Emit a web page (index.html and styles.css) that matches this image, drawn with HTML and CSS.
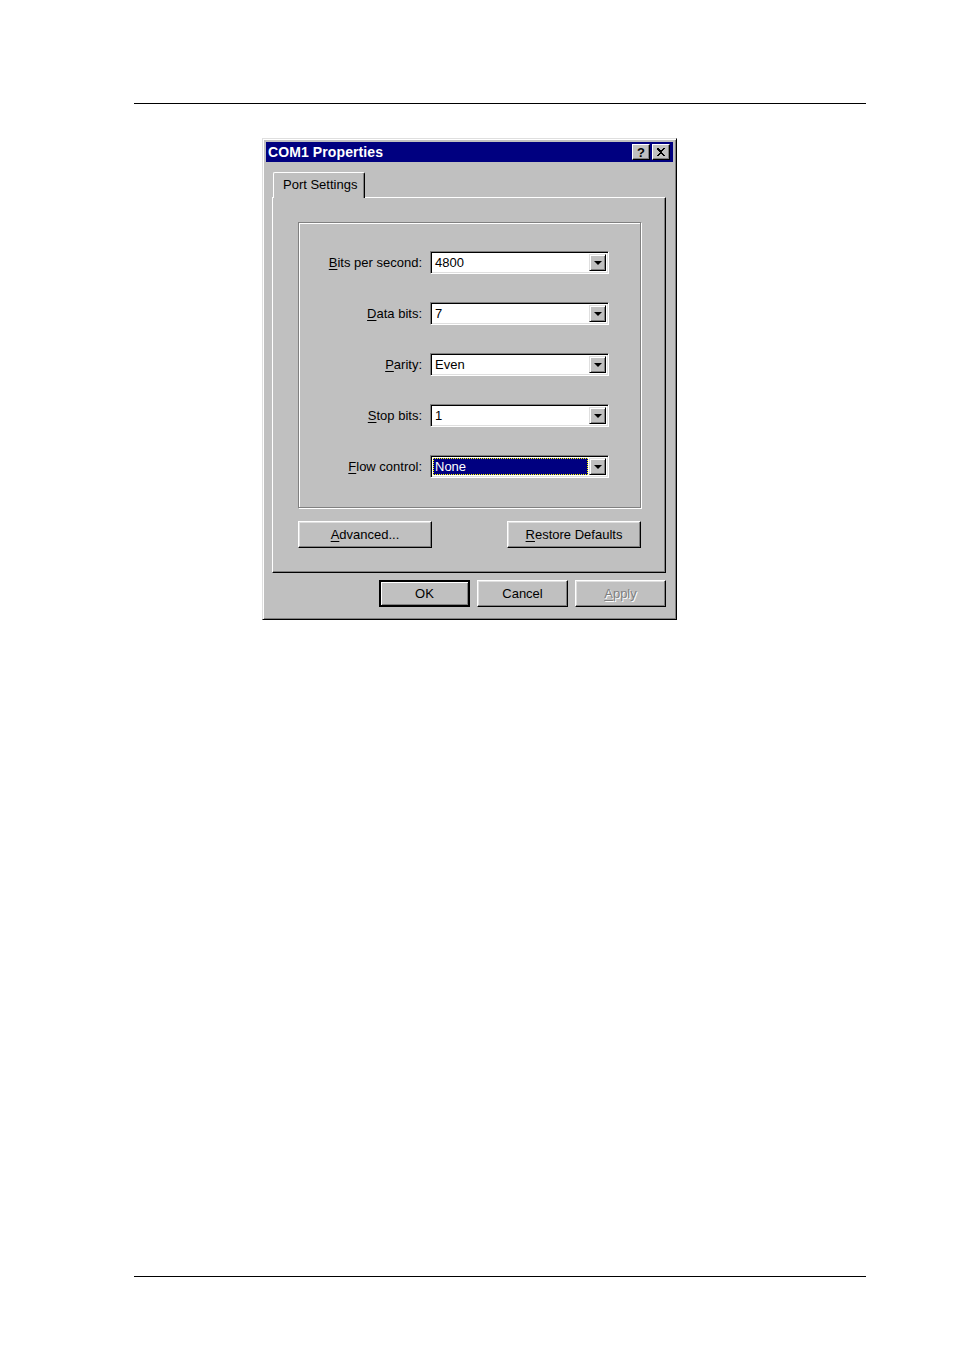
FILE: index.html
```html
<!DOCTYPE html>
<html>
<head>
<meta charset="utf-8">
<link rel="stylesheet" href="styles.css">
</head>
<body>
<div class="rule rule-top"></div>
<div class="dialog">
  <div class="titlebar">
    <span class="title">COM1 Properties</span>
    <span class="tbtns"><span class="tbtn help">?</span><span class="tbtn close">
      <svg width="10" height="9" viewBox="0 0 10 9"><path d="M1 0h2v1h1v1h2V1h1V0h2v1H8v1H7v1H6v1h0v1h1v1h1v1h1v1H7V7H6V6H4v1H3v1H1V7h1V6h1V5h1V4H3V3H2V2H1z" fill="#000"/></svg>
    </span></span>
  </div>
  <div class="tabs"><div class="tab">Port Settings</div></div>
  <div class="panel">
    <div class="group">
      <div class="row"><span class="lbl"><u>B</u>its per second:</span><div class="combo"><span class="val">4800</span><span class="arrow"><i></i></span></div></div>
      <div class="row"><span class="lbl"><u>D</u>ata bits:</span><div class="combo"><span class="val">7</span><span class="arrow"><i></i></span></div></div>
      <div class="row"><span class="lbl"><u>P</u>arity:</span><div class="combo"><span class="val">Even</span><span class="arrow"><i></i></span></div></div>
      <div class="row"><span class="lbl"><u>S</u>top bits:</span><div class="combo"><span class="val">1</span><span class="arrow"><i></i></span></div></div>
      <div class="row"><span class="lbl"><u>F</u>low control:</span><div class="combo"><span class="val sel">None</span><span class="arrow"><i></i></span></div></div>
    </div>
    <div class="panel-btns">
      <div class="btn wide"><u>A</u>dvanced...</div>
      <div class="btn wide"><u>R</u>estore Defaults</div>
    </div>
  </div>
  <div class="dlg-btns">
    <div class="btn def">OK</div>
    <div class="btn">Cancel</div>
    <div class="btn disabled"><u>A</u>pply</div>
  </div>
</div>
<div class="rule rule-bottom"></div>
</body>
</html>
```

FILE: styles.css
```css
html, body { margin: 0; padding: 0; background: #fff; }
body { font-family: "Liberation Sans", Arial, sans-serif; font-size: 13px; color: #000; width: 954px; }
u { text-decoration: underline; text-underline-offset: 2px; }

.rule { height: 0; border-top: 1px solid #000; width: 732px; margin-left: 134px; }
.rule-top { margin-top: 103px; }
.rule-bottom { margin-top: 656px; }

.dialog {
  box-sizing: border-box;
  margin-top: 34px; margin-left: 262px;
  width: 415px; height: 482px;
  background: #c0c0c0;
  border: 1px solid; border-color: #dfdfdf #000 #000 #dfdfdf;
  box-shadow: inset 1px 1px #fff, inset -1px -1px #808080;
  padding: 3px;
  display: flex; flex-direction: column;
}
.titlebar {
  height: 20px; background: #000080; color: #fff;
  display: flex; align-items: center; justify-content: space-between;
  padding: 0 3px 0 2px;
}
.title { font-weight: bold; font-size: 14px; letter-spacing: 0.1px; }
.tbtns { display: flex; gap: 2px; }
.tbtn {
  box-sizing: border-box; width: 18px; height: 16px; background: #c0c0c0; color: #000;
  border: 1px solid; border-color: #fff #000 #000 #fff;
  box-shadow: inset -1px -1px #808080;
  display: flex; align-items: center; justify-content: center;
  font-weight: bold; font-size: 13px; line-height: 1;
}
.tabs { display: flex; margin: 10px 0 0 7px; position: relative; z-index: 1; }
.tab {
  box-sizing: border-box; height: 26px; width: 92px;
  padding: 4px 0 0 9px;
  background: #c0c0c0;
  border-left: 1px solid #fff; border-top: 1px solid #fff; border-right: 1px solid #000;
  border-radius: 2px 2px 0 0;
  box-shadow: inset -1px 0 #808080;
  margin-bottom: -1px;
}
.panel {
  box-sizing: border-box; width: 394px; height: 376px; margin-left: 6px;
  border: 1px solid; border-color: #fff #000 #000 #fff;
  box-shadow: inset -1px -1px #808080;
  padding: 24px 24px 0 25px;
}
.group {
  box-sizing: border-box; height: 286px;
  border: 1px solid #808080;
  box-shadow: 1px 1px 0 #fff, inset 1px 1px 0 #fff;
  padding: 28px 31px 0 0;
  display: flex; flex-direction: column; gap: 28px;
}
.row { display: flex; justify-content: flex-end; align-items: center; height: 23px; }
.lbl { margin-right: 8px; }
.combo {
  box-sizing: border-box; width: 179px; height: 23px; background: #fff;
  border: 1px solid; border-color: #808080 #fff #fff #808080;
  box-shadow: inset 1px 1px #000, inset -1px -1px #dfdfdf;
  padding: 2px; display: flex; align-items: stretch;
}
.val { flex: 1; padding-left: 2px; line-height: 17px; }
.val.sel { background: #000080; color: #fff; outline: 1px dotted #ff0; outline-offset: -1px; margin-right: 1px; }
.arrow {
  box-sizing: border-box; width: 17px; background: #c0c0c0;
  border: 1px solid; border-color: #dfdfdf #000 #000 #dfdfdf;
  box-shadow: inset 1px 1px #fff, inset -1px -1px #808080;
  display: flex; align-items: center; justify-content: center;
}
.arrow i { width: 0; height: 0; border-left: 4px solid transparent; border-right: 4px solid transparent; border-top: 4px solid #000; }

.panel-btns { display: flex; justify-content: space-between; margin-top: 13px; }
.btn {
  box-sizing: border-box; width: 91px; height: 27px; background: #c0c0c0;
  border: 1px solid; border-color: #fff #000 #000 #fff;
  box-shadow: inset -1px -1px #808080, inset 1px 1px #dfdfdf;
  display: flex; align-items: center; justify-content: center;
}
.btn.wide { width: 134px; }
.btn.def { border: 2px solid #000; border-color: #000; box-shadow: inset 1px 1px #fff, inset -1px -1px #808080; }
.btn.disabled { color: #808080; text-shadow: 1px 1px 0 #fff; }
.dlg-btns { display: flex; justify-content: flex-end; gap: 7px; margin-top: 7px; padding-right: 7px; }
```
